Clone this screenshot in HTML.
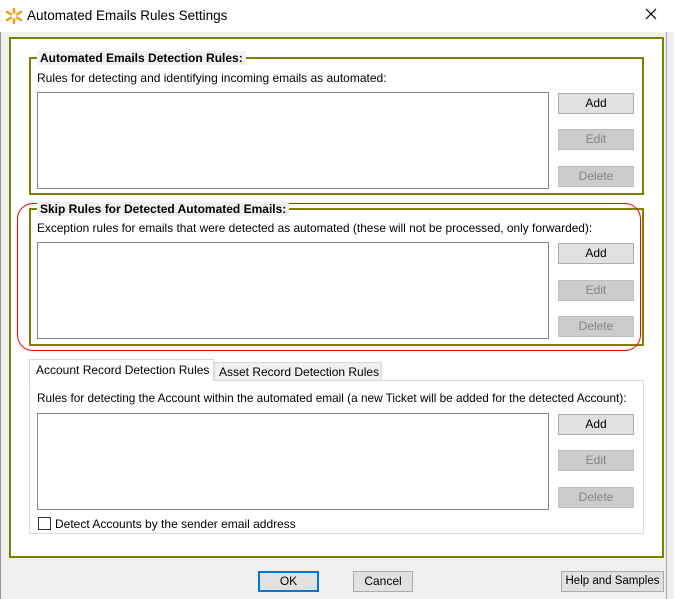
<!DOCTYPE html>
<html><head><style>
*{box-sizing:border-box;margin:0;padding:0}
body{width:674px;height:599px;background:#f0f0f0;font-family:"Liberation Sans",Arial,sans-serif;font-size:12px;color:#000;position:relative;overflow:hidden}
.a{position:absolute;white-space:nowrap}
.title{left:0;top:0;width:674px;height:32px;background:#fff}
.olive{border:2px solid #808000}
.lb{background:#fff;border:1px solid #828790}
.btn{background:#e1e1e1;border:1px solid #adadad;text-align:center;font-size:12px;line-height:19px;width:76px;height:21px}
.dis{background:#cccccc;border-color:#bfbfbf;color:#838383}
.leg{background:#f0f0f0;font-weight:bold;padding:0 3px;font-size:12px;line-height:14px}
</style></head><body>
<div class="a title"></div>
<svg class="a" style="left:5px;top:7px" width="18" height="18" viewBox="0 0 18 18"><g stroke="#f29a12" stroke-width="2.4" stroke-linecap="round"><line x1="9" y1="2" x2="9" y2="16"/><line x1="2" y1="5" x2="16" y2="13"/><line x1="2" y1="13" x2="16" y2="5"/></g><circle cx="9" cy="9" r="2.5" fill="#fff"/></svg>
<div class="a" style="left:27px;top:8px;font-size:13.5px">Automated Emails Rules Settings</div>
<svg class="a" style="left:645px;top:8px" width="12" height="12" viewBox="0 0 12 12"><path d="M1 1L11 11M11 1L1 11" stroke="#000" stroke-width="1.2"/></svg>
<div class="a" style="left:0;top:32px;width:1px;height:567px;background:#999"></div>
<div class="a" style="left:666px;top:32px;width:1px;height:567px;background:#aaa"></div>
<div class="a olive" style="left:9px;top:37px;width:655px;height:521px;background:#fff"></div>

<div class="a olive" style="left:29px;top:57px;width:615px;height:138px"></div>
<div class="a leg" style="left:37px;top:51px">Automated Emails Detection Rules:</div>
<div class="a" style="left:37px;top:71px">Rules for detecting and identifying incoming emails as automated:</div>
<div class="a lb" style="left:37px;top:92px;width:512px;height:97px"></div>
<div class="a btn" style="left:558px;top:93px">Add</div>
<div class="a btn dis" style="left:558px;top:129px">Edit</div>
<div class="a btn dis" style="left:558px;top:166px">Delete</div>

<div class="a olive" style="left:29px;top:208px;width:615px;height:138px"></div>
<div class="a" style="left:17px;top:203px;width:624px;height:148px;border:1.5px solid #f00;border-radius:16px"></div>
<div class="a leg" style="left:37px;top:202px">Skip Rules for Detected Automated Emails:</div>
<div class="a" style="left:37px;top:221px;font-size:11.9px">Exception rules for emails that were detected as automated (these will not be processed, only forwarded):</div>
<div class="a lb" style="left:37px;top:242px;width:512px;height:97px"></div>
<div class="a btn" style="left:558px;top:243px">Add</div>
<div class="a btn dis" style="left:558px;top:280px">Edit</div>
<div class="a btn dis" style="left:558px;top:316px">Delete</div>

<div class="a" style="left:29px;top:380px;width:615px;height:154px;border:1px solid #dcdcdc;background:#fff"></div>
<div class="a" style="left:214px;top:362px;width:168px;height:19px;background:#f0f0f0;border:1px solid #d9d9d9;font-size:12px;padding:2px 0 0 4px">Asset Record Detection Rules</div>
<div class="a" style="left:29px;top:359px;width:185px;height:22px;background:#fff;border:1px solid #d9d9d9;border-bottom:none;font-size:12px;padding:3px 0 0 6px">Account Record Detection Rules</div>
<div class="a" style="left:37px;top:391px;font-size:11.8px">Rules for detecting the Account within the automated email (a new Ticket will be added for the detected Account):</div>
<div class="a lb" style="left:37px;top:413px;width:512px;height:97px"></div>
<div class="a btn" style="left:558px;top:414px">Add</div>
<div class="a btn dis" style="left:558px;top:450px">Edit</div>
<div class="a btn dis" style="left:558px;top:487px">Delete</div>
<div class="a" style="left:38px;top:517px;width:13px;height:13px;border:1px solid #333;background:#fff"></div>
<div class="a" style="left:55px;top:517px">Detect Accounts by the sender email address</div>

<div class="a btn" style="left:258px;top:571px;width:61px;border:2px solid #0078d7;line-height:17px">OK</div>
<div class="a btn" style="left:353px;top:571px;width:60px">Cancel</div>
<div class="a btn" style="left:561px;top:571px;width:103px;font-size:11.5px">Help and Samples</div>
</body></html>
